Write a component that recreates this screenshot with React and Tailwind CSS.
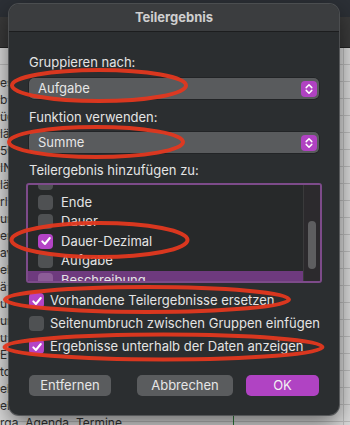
import React from "react";

const font = { fontFamily: "Inter, 'Noto Sans', 'Liberation Sans', sans-serif" };

function Check({ checked, highlight, size = 15 }) {
  return (
    <div
      className={
        "flex items-center justify-center rounded-[4px] shrink-0 " +
        (checked ? "bg-[#b444c6]" : highlight ? "bg-[#8c5c97]" : "bg-[#4f5153]")
      }
      style={{ width: size, height: size }}
    >
      {checked && (
        <svg width="12" height="12" viewBox="0 0 12 12" fill="none">
          <path d="M2.3 6.4 L4.9 9 L9.8 3" stroke="white" strokeWidth="2" strokeLinecap="round" strokeLinejoin="round" />
        </svg>
      )}
    </div>
  );
}

function Select({ value }) {
  return (
    <div className="flex h-[21px] items-center justify-between rounded-[5px] bg-[#595b5d] pl-[9px] pr-[2px] shadow-[0_0_0_0.5px_rgba(0,0,0,0.4)]">
      <span className="text-[13px] text-[#e6e6e6]">{value}</span>
      <div className="flex h-[16px] w-[16px] items-center justify-center rounded-[4px] bg-[#b042c2]">
        <svg width="16" height="16" viewBox="0 0 16 16" fill="none">
          <path d="M5.2 6.6 L8 3.8 L10.8 6.6" stroke="white" strokeWidth="1.5" strokeLinecap="round" strokeLinejoin="round" />
          <path d="M5.2 9.4 L8 12.2 L10.8 9.4" stroke="white" strokeWidth="1.5" strokeLinecap="round" strokeLinejoin="round" />
        </svg>
      </div>
    </div>
  );
}

function ListRow({ label, checked, highlight }) {
  return (
    <div className={"flex h-[19.5px] items-center gap-[8px] pl-[10px] " + (highlight ? "bg-[#6e3a7e]" : "")}>
      <Check checked={checked} highlight={highlight} />
      <span className="whitespace-nowrap text-[13px] text-[#e4e4e4]">{label}</span>
    </div>
  );
}

function OptRow({ label, checked }) {
  return (
    <div className="flex h-[23px] items-center gap-[6px]">
      <Check checked={checked} />
      <span className="whitespace-nowrap text-[13px] text-[#e4e4e4]">{label}</span>
    </div>
  );
}

const leftCells = ["es", "b", "üc", "lä", "50", "IN", "lä", "rl", "ur", "er", "av", "el", "ä", "u", "ur", "u", "E", "tc", "el", "el"];

export default function App() {
  return (
    <div className="relative h-[425px] w-[350px] overflow-hidden bg-[#dedede] pt-[4px]" style={font}>
      {/* background window */}
      <div className="absolute inset-0 flex flex-col">
        <div className="h-[17px] shrink-0 bg-[#2c3036]"></div>
        <div className="h-[31px] shrink-0 border-b border-[#222] bg-[#3a3a3a]"></div>
        <div className="flex-1 bg-[#dcdcdc] bg-[repeating-linear-gradient(to_bottom,transparent_0,transparent_16px,#bdbdbd_16px,#bdbdbd_17px)] pt-[26px]">
          {leftCells.map((c, i) => (
            <div key={i} className="h-[17px] whitespace-nowrap text-[12px] leading-[17px] text-[#333]">{c}</div>
          ))}
          <div className="h-[17px] whitespace-nowrap text-[12px] leading-[17px] text-[#333]">rga, Agenda, Termine</div>
        </div>
        <div className="absolute right-[6px] top-[48px] bottom-0 w-px bg-[#bdbdbd]"></div>
        <div className="absolute left-[233px] bottom-0 h-[10px] w-px bg-[#2f7d3a]"></div>
      </div>

      {/* dialog */}
      <div className="relative ml-[9px] flex h-[411px] w-[330px] flex-col overflow-hidden rounded-[10px] bg-[#2b2e30] shadow-[0_0_0_1px_rgba(80,82,84,0.9),0_8px_24px_rgba(0,0,0,0.55)]">
        <div className="flex h-[28px] shrink-0 items-center justify-center border-b border-[#1c1d1e] bg-[#3b3d3f]">
          <span className="text-[13px] font-bold text-[#cfcfcf]">Teilergebnis</span>
        </div>
        <div className="flex flex-col px-[20px] pt-[22px]">
          <div className="h-[16px] text-[13px] leading-[16px] text-[#e4e4e4]">Gruppieren nach:</div>
          <div className="mt-[8px]"><Select value="Aufgabe" /></div>
          <div className="mt-[10px] h-[16px] text-[13px] leading-[16px] text-[#e4e4e4]">Funktion verwenden:</div>
          <div className="mt-[7px]"><Select value="Summe" /></div>
          <div className="mt-[9px] h-[16px] text-[13px] leading-[16px] text-[#e4e4e4]">Teilergebnis hinzufügen zu:</div>
          <div className="mx-[-3px] mt-[5px] flex h-[100px] overflow-hidden rounded-[3px] border-2 border-[#7d4b8a] bg-[#27292a]">
            <div className="flex-1 overflow-hidden">
              <div className="mt-[-12px]">
                <ListRow label="" />
                <ListRow label="Ende" />
                <ListRow label="Dauer" />
                <ListRow label="Dauer-Dezimal" checked />
                <ListRow label="Aufgabe" />
                <ListRow label="Beschreibung" highlight />
              </div>
            </div>
            <div className="flex w-[17px] shrink-0 justify-center border-l border-[#3a3a3b] bg-[#2c2a2d] pt-[36px]">
              <div className="h-[48px] w-[8px] rounded-full bg-[#5e5e60]"></div>
            </div>
          </div>
          <div className="mt-[6px] flex flex-col">
            <OptRow label="Vorhandene Teilergebnisse ersetzen" checked />
            <OptRow label="Seitenumbruch zwischen Gruppen einfügen" />
            <OptRow label="Ergebnisse unterhalb der Daten anzeigen" checked />
          </div>
          <div className="mt-[17px] flex items-center">
            <div className="flex h-[21px] w-[82px] items-center justify-center rounded-[5px] bg-[#5a5c5e] text-[13px] text-[#e6e6e6]">Entfernen</div>
            <div className="ml-[26px] flex h-[21px] w-[96px] items-center justify-center rounded-[5px] bg-[#5a5c5e] text-[13px] text-[#e6e6e6]">Abbrechen</div>
            <div className="ml-[13px] flex h-[21px] w-[73px] items-center justify-center rounded-[5px] bg-[#b043c3] text-[13px] text-[#f2f2f2]">OK</div>
          </div>
        </div>
      </div>

      {/* red annotation ellipses */}
      <svg className="pointer-events-none absolute left-0 top-0" width="350" height="425" viewBox="0 0 350 425" fill="none">
        <g stroke="#e3381f" strokeWidth="4" opacity="0.95">
          <ellipse cx="99" cy="85.5" rx="87" ry="15.5" />
          <ellipse cx="96" cy="142" rx="87" ry="15" />
          <ellipse cx="99.5" cy="240" rx="88" ry="17" />
          <ellipse cx="147" cy="299.5" rx="142" ry="12.5" />
          <ellipse cx="163.5" cy="347" rx="159" ry="12.5" />
        </g>
      </svg>
    </div>
  );
}
